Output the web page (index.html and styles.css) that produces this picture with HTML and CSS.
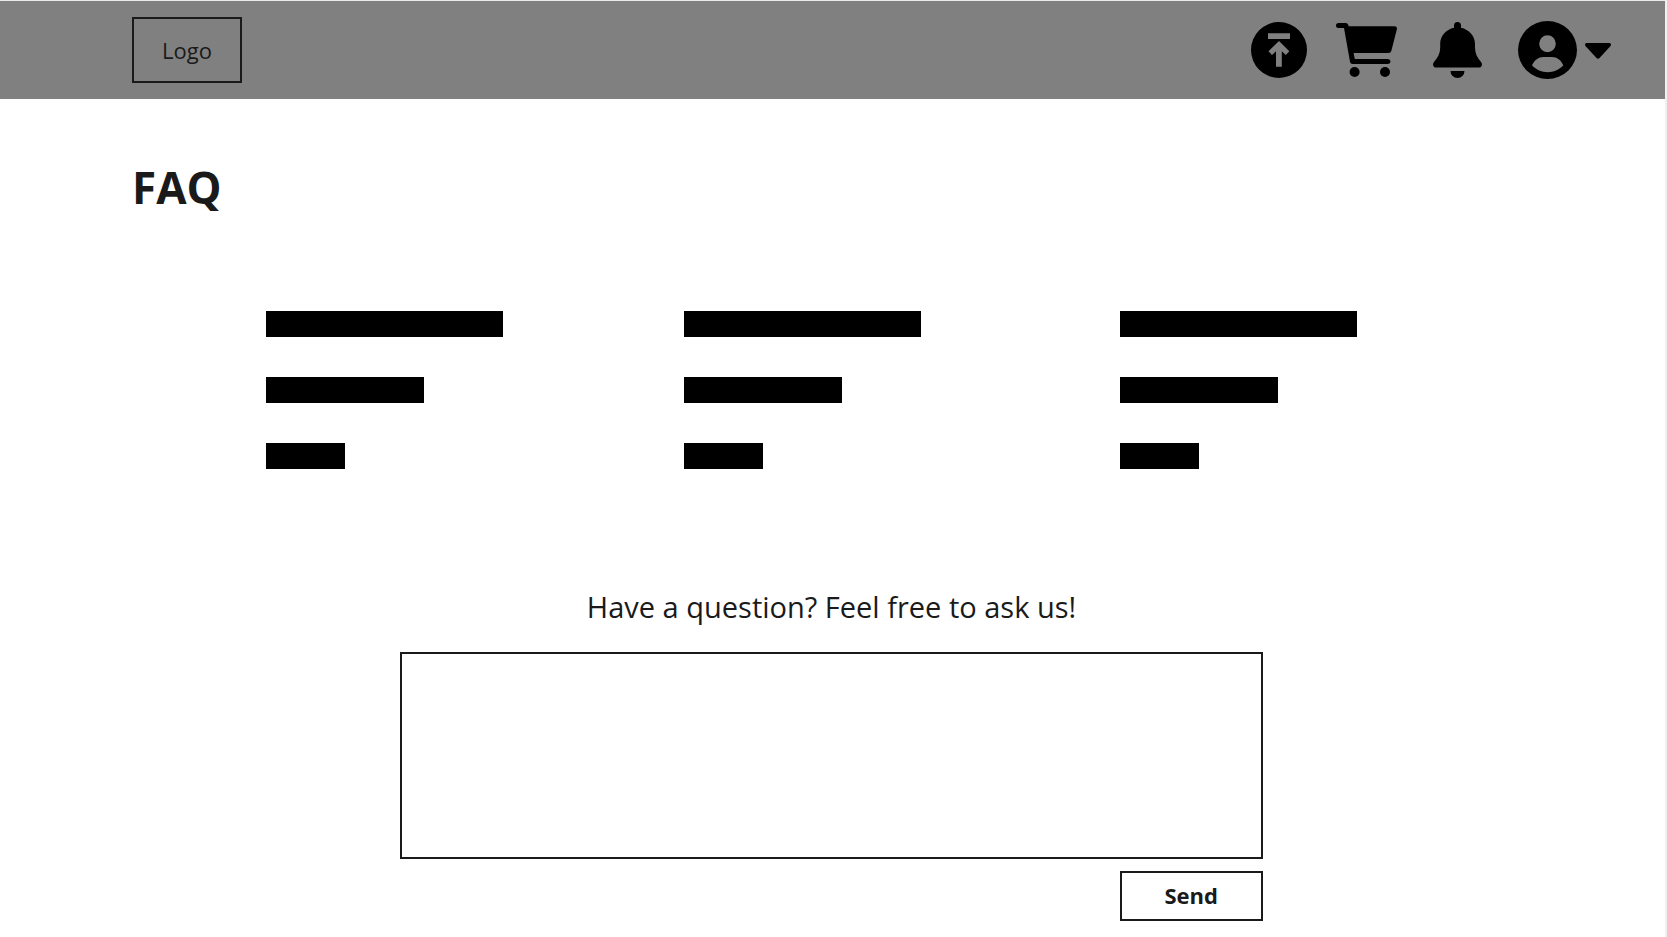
FILE: index.html
```html
<!DOCTYPE html>
<html lang="en">
<head>
<meta charset="utf-8">
<meta name="viewport" content="width=device-width, initial-scale=1">
<title>FAQ</title>
<link rel="stylesheet" href="styles.css">
</head>
<body>
<header class="topbar">
  <a class="logo" href="#">Logo</a>
  <nav class="actions" aria-label="Account">
    <div class="shop-actions">
      <button class="icon-button" type="button" aria-label="Upload">
        <svg width="56" height="56" viewBox="0 0 56 56"><path fill-rule="evenodd" d="M28 0a28 28 0 1 0 0 56a28 28 0 1 0 0-56zM17 11.3H39V17H17zM28 19L38.3 29.3L34.8 33L30.8 29.3V44.7H25V29.3L21 33L17.5 29.3z"/></svg>
      </button>
      <button class="icon-button" type="button" aria-label="Cart">
        <svg width="61" height="54" viewBox="0 0 61 54"><path d="M2.5 0H9.5Q12 0 12.7 3.3H58.5Q61.6 3.3 60.8 6.5L55.3 28Q54.7 30 52.5 30H17.6L18.8 36H52A2.5 2.5 0 0 1 52 41H16.5Q14.4 41 14 38.8L8 5H2.5A2.5 2.5 0 0 1 2.5 0z"/><circle cx="18.6" cy="49" r="5"/><circle cx="49" cy="49" r="5"/></svg>
      </button>
    </div>
    <button class="icon-button" type="button" aria-label="Notifications">
      <svg width="49" height="56" viewBox="0 0 49 56"><path d="M24.5 0A3.5 3.5 0 0 1 28 3.5V5.8C36 7.5 42 14 42 22V25.5C42 31 44 35.5 48 40Q49 41.2 49 42.5Q48.8 45.6 45.7 45.6H3.3Q.2 45.6 0 42.5Q0 41.2 1 40C5 35.5 7.2 31 7.2 25.5V22C7.2 14 13 7.500 21 5.800V3.500A3.500 3.500 0 0 1 24.500 0zM17.500 49H31.500A7 7 0 0 1 17.500 49z"/></svg>
    </button>
    <button class="icon-button account" type="button" aria-label="Profile menu">
      <svg width="59" height="58" viewBox="0 0 59 58"><path fill-rule="evenodd" d="M29.500 0A29.500 29 0 1 0 29.500 58A29.500 29 0 1 0 29.500 0zM29.500 14.300A8.300 8.500 0 1 1 29.500 31.300A8.300 8.500 0 1 1 29.500 14.300zM14 44.300C16.500 39 20.500 36 25.500 36H34C39 36 43 39 45.300 44.300C41 49 35.500 51.200 29.700 51.200S18.300 49 14 44.300z"/></svg>
      <svg width="26" height="18" viewBox="0 0 26 18"><path d="M1.500 2H24.500Q26 2 26 3.500Q26 4.500 25.300 5.300L14.500 17Q13 18.500 11.500 17L.7 5.300Q0 4.500 0 3.500Q0 2 1.500 2z"/></svg>
    </button>
  </nav>
</header>
<main class="page">
  <h1 class="title">FAQ</h1>
  <section class="topics" aria-label="Topics">
    <div class="topic"><div class="bar bar-long"></div><div class="bar bar-medium"></div><div class="bar bar-short"></div></div>
    <div class="topic"><div class="bar bar-long"></div><div class="bar bar-medium"></div><div class="bar bar-short"></div></div>
    <div class="topic"><div class="bar bar-long"></div><div class="bar bar-medium"></div><div class="bar bar-short"></div></div>
  </section>
  <form class="ask">
    <label class="ask-label" for="question">Have a question? Feel free to ask us!</label>
    <textarea class="ask-box" id="question" name="question"></textarea>
    <button class="send" type="submit">Send</button>
  </form>
</main>
</body>
</html>
```
FILE: styles.css
```css
* {
  box-sizing: border-box;
}

body {
  margin: 0;
  min-height: 100vh;
  border-right: 2px solid #f0f0f0;
  background: #fff;
  color: #1a1a1a;
  font-family: "Open Sans", "Noto Sans", sans-serif;
}

.topbar {
  display: flex;
  align-items: center;
  justify-content: space-between;
  padding: 16px 54px 16px 132px;
  border-top: 1px solid #e8ecec;
  background: #808080;
}

.logo {
  padding: 16px 28px;
  border: 2px solid #1a1a1a;
  color: #1a1a1a;
  font-size: 22px;
  font-weight: 400;
  line-height: 30px;
  text-decoration: none;
}

.actions {
  display: flex;
  align-items: center;
  gap: 36px;
}

.shop-actions {
  display: flex;
  align-items: center;
  gap: 29px;
}

.icon-button {
  display: flex;
  align-items: center;
  padding: 0;
  border: 0;
  background: none;
  cursor: pointer;
}

.account {
  gap: 8px;
}

.page {
  padding: 58px 0 16px;
}

.title {
  margin: 0 0 0 132px;
  font-size: 44px;
  font-weight: 700;
  line-height: 60px;
}

.topics {
  display: grid;
  grid-template-columns: 418fr 436fr 545fr;
  margin: 94px 0 0 266px;
}

.topic {
  display: grid;
  gap: 40px;
}

.bar {
  height: 26px;
  background: #000;
}

.bar-long {
  width: 237px;
}

.bar-medium {
  width: 158px;
}

.bar-short {
  width: 79px;
}

.ask {
  display: flex;
  flex-direction: column;
  margin: 118px 402px 0 400px;
}

.ask-label {
  font-size: 29px;
  font-weight: 400;
  line-height: 40px;
  text-align: center;
}

.ask-box {
  height: 207px;
  margin-top: 25px;
  padding: 12px;
  border: 2px solid #1a1a1a;
  border-radius: 0;
  outline: 0;
  background: #fff;
  color: inherit;
  font: 400 22px/30px "Open Sans", "Noto Sans", sans-serif;
  resize: none;
}

.send {
  align-self: flex-end;
  margin-top: 12px;
  padding: 7px 43px 9px;
  border: 2px solid #1a1a1a;
  background: #fff;
  color: inherit;
  font: 700 22px/30px "Open Sans", "Noto Sans", sans-serif;
  cursor: pointer;
}
```
